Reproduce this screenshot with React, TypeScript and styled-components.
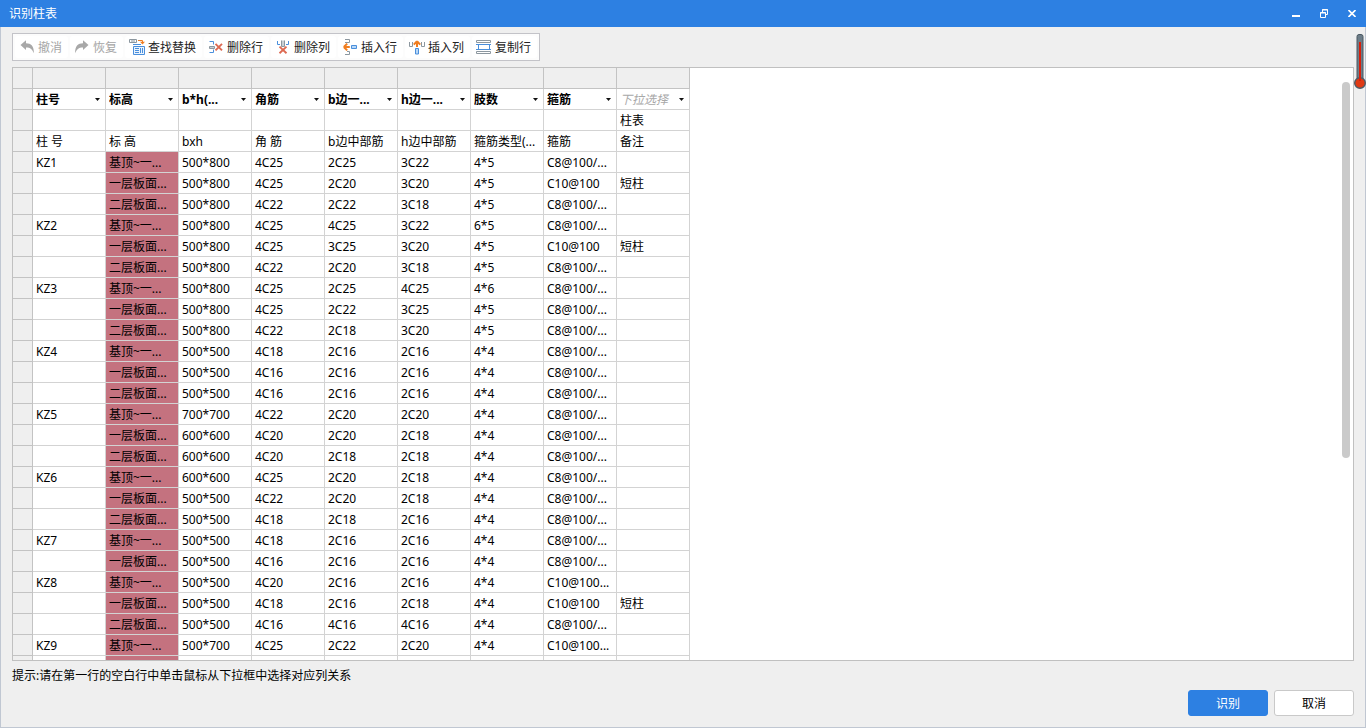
import React from 'react';
import styled, { createGlobalStyle, css } from 'styled-components';

const GlobalStyle = createGlobalStyle`
  *, *::before, *::after { box-sizing: border-box; }
  body {
    margin: 0;
    background: #efefef;
    color: #000;
    font-family: "Noto Sans", "Noto Sans CJK SC", sans-serif;
    font-size: 12px;
    line-height: 20px;
  }
  button, select { font: inherit; color: inherit; }
`;

const Window = styled.div`
  position: relative;
  display: flex;
  flex-direction: column;
  height: 100vh;
  min-height: 320px;
`;

const TitleBar = styled.header`
  flex: none;
  display: flex;
  align-items: center;
  justify-content: space-between;
  height: 27px;
  padding-left: 9px;
  background: #2d80e2;
  color: #fff;
`;

const Title = styled.h1`
  margin: 0;
  padding-top: 1px;
  font-size: 12px;
  font-weight: 400;
`;

const WindowControls = styled.div`
  display: flex;
`;

const ControlButton = styled.button`
  display: grid;
  place-items: center;
  width: 28px;
  height: 27px;
  padding: 0;
  border: 0;
  background: transparent;
  svg { display: block; }
`;

const Body = styled.main`
  flex: 1;
  min-height: 0;
  display: flex;
  flex-direction: column;
  align-items: flex-start;
  padding: 6px 11px 11px;
  border: 1px solid #c0c7d2;
  border-top: 0;
`;

const Toolbar = styled.div`
  flex: none;
  display: flex;
  gap: 2px;
  padding: 2px;
  margin-bottom: 6px;
  border: 1px solid #c3c3c8;
  background: #fcfcfc;
`;

const ToolButton = styled.button`
  display: flex;
  align-items: center;
  gap: 3px;
  height: 22px;
  padding: 0 5px 0 4px;
  border: 0;
  border-radius: 3px;
  background: #fff;
  color: #222;
  white-space: nowrap;
  svg { display: block; flex: none; }
  &:disabled { color: #a6a6a6; }
`;

const ToolLabel = styled.span`
  padding: 2px 1px 0 0;
`;

const Panel = styled.section`
  flex: 1;
  min-height: 0;
  align-self: stretch;
  display: flex;
  justify-content: space-between;
  border: 1px solid #c0c0c0;
  background: #fff;
`;

const GridViewport = styled.div`
  min-width: 0;
  overflow: hidden;
`;

const Track = styled.div`
  flex: none;
  width: 11px;
  padding: 14px 3px 0 0;
`;

const Thumb = styled.div`
  height: 65%;
  border-radius: 4px;
  background: #cacaca;
`;

const Grid = styled.table`
  table-layout: fixed;
  width: 677px;
  border-collapse: separate;
  border-spacing: 0;
`;

const cellBox = css`
  height: 21px;
  padding: 2px 0 0 3px;
  border: 0 solid #d3d3d3;
  border-width: 0 1px 1px 0;
  font-weight: 400;
  line-height: 18px;
  text-align: left;
  white-space: nowrap;
  overflow: hidden;
`;

const HeadCell = styled.th`
  ${cellBox}
  padding: 0;
  border-color: #c3c3c3;
  background: #efefef;
`;

const SelectCell = styled.th`
  ${cellBox}
  padding: 0;
`;

const Cell = styled.td<{ $invalid?: boolean }>`
  ${cellBox}
  background: ${(p) => (p.$invalid ? '#c4727f' : '#fff')};
`;

const Picker = styled.label`
  display: flex;
  align-items: center;
  padding-right: 5px;
`;

const Select = styled.select<{ $empty: boolean }>`
  flex: 1;
  min-width: 0;
  height: 20px;
  padding: 2px 0 0 3px;
  border: 0;
  background: transparent;
  appearance: none;
  font-weight: ${(p) => (p.$empty ? 400 : 700)};
  font-style: ${(p) => (p.$empty ? 'italic' : 'normal')};
  color: ${(p) => (p.$empty ? '#a8a8a8' : '#000')};
`;

const Hint = styled.p`
  flex: none;
  margin: 0;
  padding: 5px 0 4px;
`;

const Actions = styled.footer`
  flex: none;
  align-self: flex-end;
  display: flex;
  gap: 6px;
`;

const ActionButton = styled.button<{ $primary?: boolean }>`
  width: 80px;
  height: 26px;
  padding: 2px 0 0;
  border: 1px solid ${(p) => (p.$primary ? '#2d80e2' : '#c9c9c9')};
  border-radius: 3px;
  background: ${(p) => (p.$primary ? '#2d80e2' : '#fff')};
  color: ${(p) => (p.$primary ? '#fff' : '#000')};
`;

/* Floats above the dialog's right edge. */
const Thermometer = styled.svg`
  position: absolute;
  top: 33px;
  right: 0;
`;

const BLUE = '#4a8fdc';
const GRAY = '#8c979f';
const ORANGE = '#f07d1f';
const RED = '#dd6a52';

const Icon = ({ children }: { children: React.ReactNode }) => (
  <svg width="16" height="16" viewBox="0 0 16 16" fill="none" aria-hidden="true">
    {children}
  </svg>
);

const tools: { label: string; disabled?: boolean; icon: React.ReactNode }[] = [
  {
    label: '撤消',
    disabled: true,
    icon: <path d="M1.5 6 7 1.2V4.2C12 4.2 15.2 7 14.8 14.2C13.4 10.4 11.2 8.4 7 8.5V11Z" fill="#a8a8a8" />,
  },
  {
    label: '恢复',
    disabled: true,
    icon: <path d="M14.5 6 9 1.2V4.2C4 4.2.8 7 1.2 14.2C2.6 10.4 4.8 8.4 9 8.5V11Z" fill="#a8a8a8" />,
  },
  {
    label: '查找替换',
    icon: (
      <>
        <path d="M.5.5H7.5V3.5H.5ZM3 .5V3.5M5 .5V3.5" stroke={GRAY} />
        <path d="M9 1.5H13.5V3" stroke={ORANGE} />
        <path d="M11 2.8H16L13.5 5.6Z" fill={ORANGE} />
        <path d="M4.5 7.5H15.5V15.5H4.5Z" fill="#eaf3fd" stroke={BLUE} />
        <path d="M4 5.5H12M6 9.5H10M6 11.5H10M6 13.5H10M11.5 9V14M13.5 9V14" stroke={BLUE} />
      </>
    ),
  },
  {
    label: '删除行',
    icon: (
      <>
        <path d="M1.5 2.5H5.5V5.5M1.5 13.5H5.5V10.5" stroke={BLUE} />
        <path d="M1.5 7.5H6.5V9.5H1.5Z" fill="#c9d0d5" stroke={GRAY} />
        <path d="M7.5 4.8 14 11.4M14 4.8 7.5 11.4" stroke={RED} strokeWidth="1.9" />
      </>
    ),
  },
  {
    label: '删除列',
    icon: (
      <>
        <path d="M2.5 2V5.5H5M13.5 2V5.5H11" stroke={BLUE} />
        <path d="M6.5 1.5V7.5H9.5V1.5" fill="#c9d0d5" stroke={GRAY} />
        <path d="M4.5 7.6 11.5 14.2M11.5 7.6 4.5 14.2" stroke={RED} strokeWidth="1.9" />
      </>
    ),
  },
  {
    label: '插入行',
    icon: (
      <>
        <path d="M3 .5H7.5V3.5H3M3 15.5H7.5V12.5H5" stroke={GRAY} />
        <path d="M1.8 8 5.2 4.6M1.8 8 5.2 11.4M2 8H7.8" stroke={ORANGE} strokeWidth="2" />
        <path d="M9.5 6.5H14.5V9.5H9.5Z" fill="#b9d8f7" stroke={BLUE} />
      </>
    ),
  },
  {
    label: '插入列',
    icon: (
      <>
        <path d="M.5 3V7.5H3.5V3M12.5 3V7.5H15.5V3" stroke={GRAY} />
        <path d="M8 2.2 4.8 5.6M8 2.2 11.2 5.6M8 2.2V8" stroke={ORANGE} strokeWidth="2" />
        <path d="M6.5 9.5H9.5V15H6.5Z" fill="#b9d8f7" stroke={BLUE} />
      </>
    ),
  },
  {
    label: '复制行',
    icon: (
      <>
        <path d="M.5 1.5H14.5V3.5H.5ZM.5 12.5H14.5V14.5H.5Z" stroke={GRAY} />
        <path d="M2.5 5.5H13.5V10.5H2.5Z" fill="#fff" stroke={BLUE} />
        <path d="M0 5.5H15M0 10.5H15" stroke={BLUE} />
      </>
    ),
  },
];

const fields = ['柱号', '标高', 'b*h(...', '角筋', 'b边一...', 'h边一...', '肢数', '箍筋', ''];

const BASE = '基顶~一...';
const FIRST = '一层板面...';
const SECOND = '二层板面...';
const C8 = 'C8@100/...';

const rows: string[][] = [
  ['', '', '', '', '', '', '', '', '柱表'],
  ['柱 号', '标 高', 'bxh', '角 筋', 'b边中部筋', 'h边中部筋', '箍筋类型(...', '箍筋', '备注'],
  ['KZ1', BASE, '500*800', '4C25', '2C25', '3C22', '4*5', C8, ''],
  ['', FIRST, '500*800', '4C25', '2C20', '3C20', '4*5', 'C10@100', '短柱'],
  ['', SECOND, '500*800', '4C22', '2C22', '3C18', '4*5', C8, ''],
  ['KZ2', BASE, '500*800', '4C25', '4C25', '3C22', '6*5', C8, ''],
  ['', FIRST, '500*800', '4C25', '3C25', '3C20', '4*5', 'C10@100', '短柱'],
  ['', SECOND, '500*800', '4C22', '2C20', '3C18', '4*5', C8, ''],
  ['KZ3', BASE, '500*800', '4C25', '2C25', '4C25', '4*6', C8, ''],
  ['', FIRST, '500*800', '4C25', '2C22', '3C25', '4*5', C8, ''],
  ['', SECOND, '500*800', '4C22', '2C18', '3C20', '4*5', C8, ''],
  ['KZ4', BASE, '500*500', '4C18', '2C16', '2C16', '4*4', C8, ''],
  ['', FIRST, '500*500', '4C16', '2C16', '2C16', '4*4', C8, ''],
  ['', SECOND, '500*500', '4C16', '2C16', '2C16', '4*4', C8, ''],
  ['KZ5', BASE, '700*700', '4C22', '2C20', '2C20', '4*4', C8, ''],
  ['', FIRST, '600*600', '4C20', '2C20', '2C18', '4*4', C8, ''],
  ['', SECOND, '600*600', '4C20', '2C18', '2C18', '4*4', C8, ''],
  ['KZ6', BASE, '600*600', '4C25', '2C20', '2C18', '4*4', C8, ''],
  ['', FIRST, '500*500', '4C22', '2C20', '2C18', '4*4', C8, ''],
  ['', SECOND, '500*500', '4C18', '2C18', '2C16', '4*4', C8, ''],
  ['KZ7', BASE, '500*500', '4C18', '2C16', '2C16', '4*4', C8, ''],
  ['', FIRST, '500*500', '4C16', '2C16', '2C16', '4*4', C8, ''],
  ['KZ8', BASE, '500*500', '4C20', '2C16', '2C16', '4*4', 'C10@100...', ''],
  ['', FIRST, '500*500', '4C18', '2C16', '2C18', '4*4', 'C10@100', '短柱'],
  ['', SECOND, '500*500', '4C16', '4C16', '4C16', '4*4', C8, ''],
  ['KZ9', BASE, '500*700', '4C25', '2C22', '2C20', '4*4', 'C10@100...', ''],
  ['', '', '', '', '', '', '', '', ''],
];

const FieldPicker = ({ value, column }: { value: string; column: number }) => (
  <Picker>
    <Select $empty={!value} defaultValue={value} aria-label={`第${column}列`}>
      <option value="">下拉选择</option>
      {fields.filter(Boolean).map((f) => (
        <option key={f} value={f}>{f}</option>
      ))}
    </Select>
    <svg width="5" height="3" viewBox="0 0 5 3" aria-hidden="true">
      <path d="M0 0H5L2.5 3Z" fill="#111" />
    </svg>
  </Picker>
);

export default function App() {
  return (
    <>
      <GlobalStyle />
      <Window>
        <TitleBar>
          <Title>识别柱表</Title>
          <WindowControls>
            <ControlButton aria-label="最小化">
              <svg width="8" height="9" viewBox="0 0 8 9"><path d="M0 6H8V8H0Z" fill="#fff" /></svg>
            </ControlButton>
            <ControlButton aria-label="还原">
              <svg width="8" height="9" viewBox="0 0 8 9" fill="none" stroke="#fff">
                <path d="M2.5 3V.5H7.5V5.5H6M2 1H8M.5 3.5H5.5V8.5H.5ZM0 4H6" />
              </svg>
            </ControlButton>
            <ControlButton aria-label="关闭">
              <svg width="8" height="7" viewBox="0 0 8 7"><path d="M.5 0 7.5 7M7.5 0 .5 7" stroke="#fff" strokeWidth="1.6" /></svg>
            </ControlButton>
          </WindowControls>
        </TitleBar>
        <Body>
          <Toolbar role="toolbar">
            {tools.map((t) => (
              <ToolButton key={t.label} disabled={t.disabled}>
                <Icon>{t.icon}</Icon>
                <ToolLabel>{t.label}</ToolLabel>
              </ToolButton>
            ))}
          </Toolbar>
          <Panel>
            <GridViewport>
              <Grid>
                <colgroup>
                  <col width="20" />
                  {fields.map((_, i) => <col key={i} width="73" />)}
                </colgroup>
                <thead>
                  <tr>
                    <HeadCell />
                    {fields.map((_, i) => <HeadCell key={i} />)}
                  </tr>
                  <tr>
                    <HeadCell />
                    {fields.map((f, i) => (
                      <SelectCell key={i}><FieldPicker value={f} column={i + 1} /></SelectCell>
                    ))}
                  </tr>
                </thead>
                <tbody>
                  {rows.map((row, r) => (
                    <tr key={r}>
                      <HeadCell />
                      {row.map((text, c) => (
                        <Cell key={c} $invalid={c === 1 && r > 1}>{text}</Cell>
                      ))}
                    </tr>
                  ))}
                </tbody>
              </Grid>
            </GridViewport>
            <Track><Thumb /></Track>
          </Panel>
          <Hint>提示:请在第一行的空白行中单击鼠标从下拉框中选择对应列关系</Hint>
          <Actions>
            <ActionButton $primary>识别</ActionButton>
            <ActionButton>取消</ActionButton>
          </Actions>
        </Body>
        <Thermometer width="12" height="57" viewBox="0 0 12 57" aria-hidden="true">
          <rect x="3" y="1.5" width="6" height="48" rx="2" fill="#6d7d88" stroke="#4a5862" />
          <circle cx="6" cy="50" r="5.3" fill="#e03a14" stroke="#4d5b66" strokeWidth="1.4" />
          <path d="M5 9H7V48H5Z" fill="#d8200c" />
        </Thermometer>
      </Window>
    </>
  );
}
